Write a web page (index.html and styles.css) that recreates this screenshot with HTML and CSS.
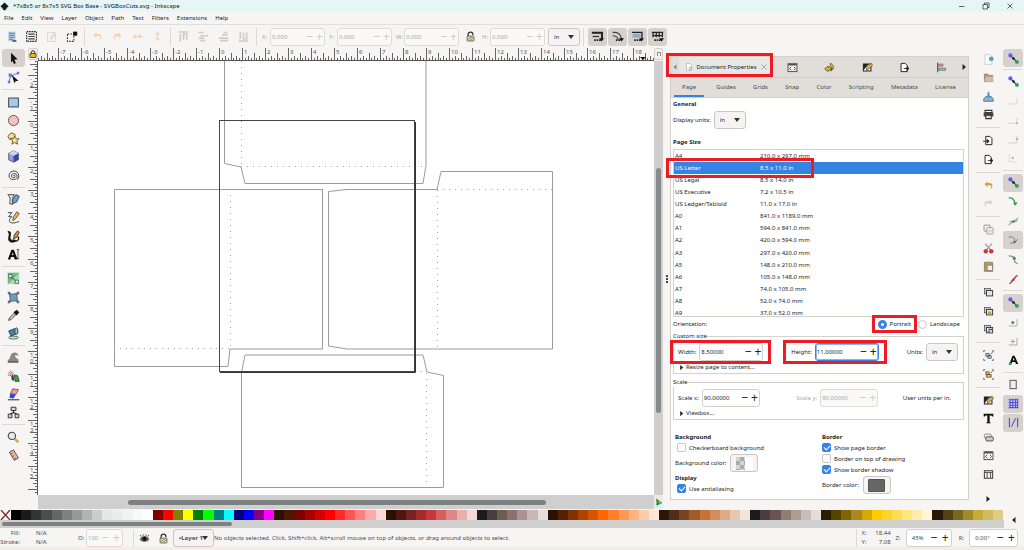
FILE: index.html
```
<!DOCTYPE html>
<html lang="en">
<head>
<meta charset="utf-8">
<title>*7x8x5 or 8x7x5 SVG Box Base - SVGBoxCuts.svg - Inkscape</title>
<link rel="stylesheet" href="styles.css">
</head>
<body>
<svg class="defs" aria-hidden="true">
  <symbol id="snapnodes" viewBox="0 0 16 16"><path d="M3 3l10 10" stroke="#333" stroke-width="1.600"/><circle cx="3.500" cy="3.500" r="3" fill="#5a5aff"/><circle cx="8" cy="8" r="1.900" fill="#222"/><circle cx="13" cy="13" r="2.800" fill="#2f9e5b"/></symbol>
  <symbol id="lock" viewBox="0 0 16 16"><path d="M4.500 8V5a3.500 3.500 0 0 1 7 0v1" fill="none" stroke="#333" stroke-width="1.800"/><rect x="3" y="7.500" width="10" height="7" rx="1" fill="#f5e6a8" stroke="#333"/><path d="M4 12.500l6-4M7 14l5-4" stroke="#555"/></symbol>
  <symbol id="undo" viewBox="0 0 16 16"><path d="M6.500 2L2 6l4.500 4V7.500H10c2 0 2.500 1.500 1.500 3.500l-1 2.500c4-2 5-9-1-9h-3z" fill="currentColor"/></symbol>
  <symbol id="fillstroke" viewBox="0 0 16 16"><path d="M2 3h11v10H2z" fill="#fff" stroke="#222" stroke-width="1.500"/><path d="M2 3h8L2 12z" fill="#222"/><path d="M6 12l1-4 6-6 2.500 2.500L9 11z" fill="#e9b93a" stroke="#222" stroke-width=".8"/></symbol>
  <symbol id="xml" viewBox="0 0 16 16"><rect x="1.500" y="2.500" width="13" height="11.500" fill="#f4f4f4" stroke="#444" stroke-width="1.300"/><path d="M2 4h12" stroke="#444" stroke-width="2"/><path d="M6 7L3.700 9.500 6 12M10 7l2.300 2.500L10 12" fill="none" stroke="#444" stroke-width="1.300"/></symbol>
  <symbol id="export" viewBox="0 0 16 16"><path d="M3 2h6l3 3v9H3z" fill="#fff" stroke="#222" stroke-width="1.400"/><path d="M7 9.500h7M11.500 7l3 2.500-3 2.500z" fill="#222" stroke="#222" stroke-width="1.200"/></symbol>
  <symbol id="copies" viewBox="0 0 16 16"><rect x="2" y="2" width="9" height="8" fill="#c8d0d8" stroke="#444"/><rect x="5" y="5" width="9" height="8" fill="#dfe5ea" stroke="#333" stroke-width="1.300"/></symbol>
  <symbol id="right" viewBox="0 0 16 16"><path d="M5 2l7 6-7 6z" fill="#222"/></symbol>
</svg>

<header class="titlebar">
  <svg class="icon small" viewBox="0 0 16 16"><path d="M8 1l7 6.500c.5 1.500-3 2-3 2l1 1.500-3 1 1 1.500L8 15l-3-1.500 1-1.500-3-1 1-1.500s-3.500-.5-3-2z" fill="#15191c"/></svg>
  <h1>*7x8x5 or 8x7x5 SVG Box Base - SVGBoxCuts.svg - Inkscape</h1>
  <div class="winbuttons">
    <button aria-label="Minimize"><svg class="icon mini" viewBox="0 0 16 16"><path d="M2 9h11" stroke="#333" stroke-width="1.500"/></svg></button>
    <button aria-label="Restore"><svg class="icon mini" viewBox="0 0 16 16"><path d="M2 5h9v9H2zM5 5V2h9v9h-3" fill="none" stroke="#333" stroke-width="1.500"/></svg></button>
    <button aria-label="Close"><svg class="icon mini" viewBox="0 0 16 16"><path d="M3 3l10 10M13 3L3 13" stroke="#333" stroke-width="1.500"/></svg></button>
  </div>
</header>

<nav class="menubar">
  <button>File</button><button>Edit</button><button>View</button><button>Layer</button><button>Object</button><button>Path</button><button>Text</button><button>Filters</button><button>Extensions</button><button>Help</button>
</nav>

<div class="toolbar">
  <div class="group">
    <button aria-label="Select all"><svg class="icon" viewBox="0 0 16 16"><rect x="4" y="2" width="9" height="12" fill="#b9cfe6"/><path d="M5 4h7M5 6.500h7M5 9h7M5 11.500h5" stroke="#5c81a8" stroke-width="1.200"/><path d="M9 13.500h5" stroke="#222" stroke-width="1.500"/></svg></button>
    <button aria-label="Select all in layers"><svg class="icon" viewBox="0 0 16 16"><rect x="2" y="2" width="12" height="12" fill="none" stroke="#222" stroke-width="1.300" stroke-dasharray="2 1"/><path d="M4 5h8M4 8h8M4 11h8" stroke="#444" stroke-width="1.500"/></svg></button>
    <button aria-label="Deselect"><svg class="icon faded" viewBox="0 0 16 16"><rect x="3" y="3" width="10" height="11" fill="none" stroke="#bbb"/><path d="M6 10l5-6 2 2-5 6z" fill="#f6cfa0" stroke="#cba"/></svg></button>
    <button aria-label="Touch selection"><svg class="icon" viewBox="0 0 16 16"><rect x="3" y="5" width="8" height="9" fill="none" stroke="#333" stroke-width="1.300" stroke-dasharray="2 1.500"/><rect x="10" y="2" width="5" height="5" fill="#111"/></svg></button>
  </div>
  <div class="group orange">
    <button aria-label="Rotate left"><svg class="icon small"><use href="#undo"/></svg></button>
    <button aria-label="Rotate right"><svg class="icon small flip"><use href="#undo"/></svg></button>
    <button aria-label="Flip horizontal"><svg class="icon small" viewBox="0 0 16 16"><path d="M1 8l4-4v3h6V4l4 4-4 4V9H5v3z" fill="currentColor"/></svg></button>
    <button aria-label="Flip vertical"><svg class="icon small" viewBox="0 0 16 16"><path d="M8 1l4 4H9v6h3l-4 4-4-4h3V5H4z" fill="currentColor"/></svg></button>
  </div>
  <div class="group grey">
    <button aria-label="Raise to top"><svg class="icon" viewBox="0 0 16 16"><path d="M2 2.500h12M4 14V5M8 12V5h4v7" fill="none" stroke="currentColor" stroke-width="2"/></svg></button>
    <button aria-label="Raise"><svg class="icon" viewBox="0 0 16 16"><path d="M2 3h6M4 7h10M2 10h7M4 13h6" fill="none" stroke="currentColor" stroke-width="2"/></svg></button>
    <button aria-label="Lower"><svg class="icon" viewBox="0 0 16 16"><path d="M8 3h5M6 6h7M2 10h12M4 13h10" fill="none" stroke="currentColor" stroke-width="2"/></svg></button>
    <button aria-label="Lower to bottom"><svg class="icon" viewBox="0 0 16 16"><path d="M2 13.500h12M4 2v9M8 3v8h4V3" fill="none" stroke="currentColor" stroke-width="2"/></svg></button>
  </div>
  <div class="group fields">
    <label for="fx">X:</label><span class="spin off"><input id="fx" value="0.000" disabled><button disabled>−</button><button disabled>+</button></span>
    <label for="fy">Y:</label><span class="spin off"><input id="fy" value="0.000" disabled><button disabled>−</button><button disabled>+</button></span>
    <label for="fw">W:</label><span class="spin off"><input id="fw" value="0.000" disabled><button disabled>−</button><button disabled>+</button></span>
    <button aria-label="Lock ratio" class="lockbtn"><svg class="icon small"><use href="#lock"/></svg></button>
    <label for="fh">H:</label><span class="spin off"><input id="fh" value="0.000" disabled><button disabled>−</button><button disabled>+</button></span>
    <span class="drop"><select aria-label="Unit"><option>in</option></select></span>
  </div>
  <div class="group toggles">
    <button aria-label="Scale stroke" class="on"><svg class="icon" viewBox="0 0 16 16"><path d="M1 3.500h12.500v7" fill="none" stroke="#222" stroke-width="2.500"/><path d="M2 8h8" stroke="#333" stroke-width="1.500"/><path d="M4 12.500h9" stroke="#222" stroke-width="2" stroke-dasharray="2 1"/><path d="M10 10h6l-3 4z" fill="#111"/></svg></button>
    <button aria-label="Scale corners" class="on"><svg class="icon" viewBox="0 0 16 16"><path d="M2 3c6-1 10 2 11 8" fill="none" stroke="#444" stroke-width="1.500"/><path d="M2 7c4 0 6 1 7 5" fill="none" stroke="#444" stroke-width="1.300"/><path d="M6 12.500h7" stroke="#222" stroke-width="2" stroke-dasharray="2 1"/><path d="M10 10h6l-3 4z" fill="#111"/></svg></button>
    <button aria-label="Move gradients" class="on"><svg class="icon" viewBox="0 0 16 16"><path d="M1 3h12.500v7" fill="none" stroke="#222" stroke-width="1.600"/><path d="M2 4.500h10v5H2z" fill="#8faecb"/><path d="M4 12.500h9" stroke="#222" stroke-width="2" stroke-dasharray="2 1"/><path d="M10 10h6l-3 4z" fill="#111"/></svg></button>
    <button aria-label="Move patterns" class="on"><svg class="icon" viewBox="0 0 16 16"><path d="M1 3h14M2.500 3v6M6.500 3v6M10 3v6M14 3v6M2 7h12" stroke="#222" stroke-width="1.500"/><path d="M4 12.500h9" stroke="#222" stroke-width="2" stroke-dasharray="2 1"/><path d="M10 10h6l-3 4z" fill="#111"/></svg></button>
  </div>
</div>

<main class="work">
  <aside class="toolbox">
    <button class="on" aria-label="Selector"><svg class="icon" viewBox="0 0 16 16"><path d="M5 1l8 8-4 .5 2 4-2.500 1.200-1.700-4L5 13z" fill="#111"/></svg></button>
    <button aria-label="Node"><svg class="icon" viewBox="0 0 16 16"><path d="M3 14C2 8 6 4 14 3" fill="none" stroke="#7a8ed8" stroke-width="1.300"/><path d="M1 12h3v3H1zM2 3h4v4H2zM12 1h3v3h-3z" fill="#5a78e8"/><path d="M6 5l8 7-3.500.5L9 15z" fill="#111"/></svg></button>
    <i class="sep"></i>
    <button aria-label="Rectangle"><svg class="icon" viewBox="0 0 16 16"><rect x="2" y="2.500" width="12" height="11" fill="#a9c8e6" stroke="#345" stroke-width="1.200"/></svg></button>
    <button aria-label="Ellipse"><svg class="icon" viewBox="0 0 16 16"><circle cx="8" cy="8" r="6.200" fill="#f8c0c6" stroke="#654" stroke-width="1.200"/></svg></button>
    <button aria-label="Star"><svg class="icon" viewBox="0 0 16 16"><path d="M1 5l4-4 5 2-1 5-6 1z" fill="#f3d98b" stroke="#5a4a20"/><path d="M9.500 5l1.500 3 4 .5-3 2.500 1 4-3.500-2L6 15l1-4-3-2.500 4-.5z" fill="#f9e08a" stroke="#5a4a20"/></svg></button>
    <button aria-label="3D box"><svg class="icon" viewBox="0 0 16 16"><path d="M8 1l6 3v8l-6 3-6-3V4z" fill="#8d9fe0" stroke="#556"/><path d="M8 7l6-3v8l-6 3z" fill="#344a9c"/><path d="M2 4l6-3 6 3-6 3z" fill="#ccd6f6"/></svg></button>
    <button aria-label="Spiral"><svg class="icon" viewBox="0 0 16 16"><path d="M8 8.500c0-1.500 2-1 2 .5 0 2.500-4.500 2.500-4.500-.5 0-4 7-4 7 .5 0 5.500-10 5.500-10-.5 0-8 12-8 12 0 0 2-1 4-2 5" fill="none" stroke="#444" stroke-width="1.200"/></svg></button>
    <i class="sep"></i>
    <button aria-label="Pen"><svg class="icon" viewBox="0 0 16 16"><path d="M1 2h8c-3 3-1 8-2 12l-4-1c1-4 2-7-2-11z" fill="#ddd" stroke="#333"/><path d="M7 13V8l4-6 4 2-3 7z" fill="#6fa2cf" stroke="#333"/></svg></button>
    <button aria-label="Pencil"><svg class="icon" viewBox="0 0 16 16"><path d="M1 2h5L2 7h4c-3 3-4 5-2 7 3 2 7 0 11-1" fill="none" stroke="#444" stroke-width="1.200"/><path d="M7 12l1-5 4-6 3 2-4 6z" fill="#f0b438" stroke="#543"/></svg></button>
    <button aria-label="Calligraphy"><svg class="icon" viewBox="0 0 16 16"><path d="M1 2c6-1 2 5 3 9 1 2 3 2 4 1l3 1c-2 3-9 3-9-2 0-4 2-7-1-9z" fill="#111" stroke="#111"/><path d="M8 11l1-5 4-5 2 2-3 6z" fill="#d98b32" stroke="#321"/><path d="M10 14c3 0 5-2 4-6" fill="none" stroke="#111" stroke-width="1.600"/></svg></button>
    <button aria-label="Text"><svg class="icon" viewBox="0 0 16 16"><path d="M1 14l4.500-12h3L13 14h-3.500l-1-3H5l-1 3zM6 8.500h2L7 5.500z" fill="#111" fill-rule="evenodd"/><path d="M12 2h3M13.500 2v11M12 13h3" stroke="#333"/></svg></button>
    <i class="sep"></i>
    <button aria-label="Gradient"><svg class="icon" viewBox="0 0 16 16"><rect x="1" y="1" width="14" height="14" fill="#a6dcae"/><path d="M1 1h14L1 15z" fill="#6fb87e"/><path d="M4 5l8 7" stroke="#222"/><path d="M2 3h4v4H2zM10 10h4v4h-4z" fill="#e8f4e8" stroke="#456"/></svg></button>
    <button aria-label="Mesh"><svg class="icon" viewBox="0 0 16 16"><path d="M3 3c4 2 6 0 10 0-2 4 0 6 0 10-4-2-6 0-10 0 2-4 0-6 0-10z" fill="#6d9fae" stroke="#345"/><path d="M8 3v10M3 8h10" stroke="#4b8"/><path d="M1 1h3v3H1zM12 1h3v3h-3zM1 12h3v3H1zM12 12h3v3h-3z" fill="#668"/></svg></button>
    <button aria-label="Dropper"><svg class="icon" viewBox="0 0 16 16"><path d="M2 14l1-3 6-6 2 2-6 6z" fill="#ccc" stroke="#333"/><path d="M8 4l4-3 3 3-3 4z" fill="#111"/></svg></button>
    <button aria-label="Paint bucket"><svg class="icon" viewBox="0 0 16 16"><path d="M2 5l7-3 4 6-8 3z" fill="#4d82a8" stroke="#234"/><ellipse cx="11.500" cy="5" rx="2" ry="4" fill="#9bc" stroke="#234"/><ellipse cx="8" cy="13" rx="6" ry="1.800" fill="#d5e5d5" stroke="#354"/></svg></button>
    <i class="sep"></i>
    <button aria-label="Tweak"><svg class="icon" viewBox="0 0 16 16"><path d="M1 14v-3c4-1 2-8 7-9 3-1 6 1 6 4l-3-1c-2 0-1 4 3 5v4z" fill="#888"/><path d="M1 13.500h13" stroke="#555" stroke-width="1.500"/></svg></button>
    <button aria-label="Spray"><svg class="icon" viewBox="0 0 16 16"><path d="M2 3l5 3M1 6l6 1M4 1l4 4" stroke="#a55" stroke-width="1.500" stroke-dasharray="1.500 1"/><path d="M5 7l3-1 1 7H6z" fill="#444"/><path d="M9 6l4 1 2 7h-5z" fill="#4c9a4c" stroke="#243"/></svg></button>
    <button aria-label="Eraser"><svg class="icon" viewBox="0 0 16 16"><path d="M7 1l7 1-3 6-7-1z" fill="#eba184" stroke="#844"/><path d="M4 7l7 1-3 5-5-1z" fill="#2c46d8"/><path d="M1 14.500h14" stroke="#333" stroke-width="1.300"/></svg></button>
    <button aria-label="Connector"><svg class="icon" viewBox="0 0 16 16"><path d="M8 5v3M4 10l4-2 4 2" fill="none" stroke="#222" stroke-width="1.400"/><path d="M5 1.500h6v4H5zM1.500 10h4.500v4.500H1.500zM10 10h4.500v4.500H10z" fill="#c8d8ea" stroke="#333" stroke-width="1.200"/></svg></button>
    <i class="sep"></i>
    <button aria-label="Zoom"><svg class="icon" viewBox="0 0 16 16"><path d="M9 9l5 5" stroke="#e0a52c" stroke-width="3"/><circle cx="6" cy="6" r="4.500" fill="#dcebf6" stroke="#444" stroke-width="1.300"/></svg></button>
    <button aria-label="Measure"><svg class="icon" viewBox="0 0 16 16"><path d="M3 4l5-3 6 10-5 3z" fill="#e3b8a4" stroke="#6a4a40" stroke-width="1.200"/><path d="M5 6l2-1M7 9l2-1M9 12l2-1" stroke="#644"/></svg></button>
  </aside>

  <section class="canvasarea">
    <button class="guidelock" aria-label="Lock guides"><svg class="icon mini" viewBox="0 0 16 16"><path d="M4.500 8V5a3.500 3.500 0 0 1 7 0v3" fill="none" stroke="#222" stroke-width="2"/><rect x="2" y="7" width="12" height="8" rx="1" fill="#e8b923" stroke="#222" stroke-width="1.500"/></svg></button>
    <svg class="hruler" id="hruler"></svg>
    <button class="cornerbtn" aria-label="Zoom to page"><svg class="icon mini" viewBox="0 0 16 16"><path d="M5 12V5h6v7" fill="none" stroke="#666" stroke-width="1.500"/></svg></button>
    <svg class="vruler" id="vruler"></svg>
    <svg class="canvas" role="img" aria-label="Box drawing">
      <g transform="translate(-38 -61)" fill="none">
        <path class="cut" d="M224.500 61V163.500L241 167L245 183.500H423L426 165V61M322.500 189V349H230L228 366.500H114.500V189.500H322.500M437 189.500H347L328.500 191.500V346L347 349H552.500V171.500H441L437 189.500M241.500 487.500V373L245 355H423L427 372L443.500 375.500V487.500Z"/>
        <path class="fold" d="M241.500 61V164M241 166.500H426M230.500 189V349M114 348.500H230M437.500 190V349M437 189.500H552M426.500 373V487M241 371.500H426"/>
        <rect x="219.500" y="120.500" width="195" height="251" class="pageline"/>
        <path d="M415.500 122v250.500H220" class="shadow"/>
      </g>
    </svg>
    <div class="vscroll"><i></i></div>
    <div class="hscroll"><i></i></div>
    <button class="cms" aria-label="Color management"><svg class="icon mini" viewBox="0 0 16 16"><path d="M2 1l13 9-12 5z" fill="#3c3"/><path d="M2 1l6 4-3 5z" fill="#e33"/><path d="M3 15l2-6 4 3z" fill="#33e"/><path d="M9 6l5 4-5 2z" fill="#2bb"/></svg></button>
  </section>

  <div class="handle"><i></i></div>

  <section class="dialog">
    <div class="docktabs">
      <button class="arrow" aria-label="Previous"><svg class="icon mini" viewBox="0 0 16 16"><path d="M11 3L5 8l6 5z" fill="#888"/></svg></button>
      <div class="docktab current"><svg class="icon mini" viewBox="0 0 16 16"><path d="M3 1h7l3 3v11H3z" fill="#fff" stroke="#999"/><circle cx="11" cy="11" r="3" fill="#ddd" stroke="#888"/></svg><span>Document Properties</span><button aria-label="Close tab"><svg class="icon mini" viewBox="0 0 16 16"><path d="M3 3l10 10M13 3L3 13" stroke="#aaa" stroke-width="2"/></svg></button></div>
      <button class="docktab" aria-label="XML editor"><svg class="icon small"><use href="#xml"/></svg></button>
      <button class="docktab" aria-label="Export"><svg class="icon small" viewBox="0 0 16 16"><path d="M1 10l5-4v2c3-1 4-3 3-6 5 1 7 8 2 10H6v2z" fill="#e6b422" stroke="#444"/><path d="M9 7l4 2-3 5" fill="#555"/></svg></button>
      <button class="docktab" aria-label="Fill and stroke"><svg class="icon small"><use href="#fillstroke"/></svg></button>
      <button class="docktab" aria-label="Export image"><svg class="icon small"><use href="#export"/></svg></button>
      <button class="docktab" aria-label="Align"><svg class="icon small" viewBox="0 0 16 16"><path d="M2.500 1v14" stroke="#333" stroke-width="1.400"/><path d="M4 3h6v3H4z" fill="#e0a0a0" stroke="#855"/><path d="M4 9h10v3H4z" fill="#a9c8e6" stroke="#456"/></svg></button>
      <button class="arrow" aria-label="Next"><svg class="icon mini"><use href="#right"/></svg></button>
    </div>
    <div class="subtabs">
      <button class="current">Page</button><button>Guides</button><button>Grids</button><button>Snap</button><button>Color</button><button>Scripting</button><button>Metadata</button><button>License</button>
    </div>
    <div class="page">
      <h2>General</h2>
      <div class="line units"><label for="du">Display units:</label><span class="drop"><select id="du"><option>in</option></select></span></div>
      <h2 class="sizehead">Page Size</h2>
      <div class="list">
        <table>
          <tr><td>A4</td><td>210.0 x 297.0 mm</td></tr>
          <tr class="picked"><td>US Letter</td><td>8.5 x 11.0 in</td></tr>
          <tr><td>US Legal</td><td>8.5 x 14.0 in</td></tr>
          <tr><td>US Executive</td><td>7.2 x 10.5 in</td></tr>
          <tr><td>US Ledger/Tabloid</td><td>11.0 x 17.0 in</td></tr>
          <tr><td>A0</td><td>841.0 x 1189.0 mm</td></tr>
          <tr><td>A1</td><td>594.0 x 841.0 mm</td></tr>
          <tr><td>A2</td><td>420.0 x 594.0 mm</td></tr>
          <tr><td>A3</td><td>297.0 x 420.0 mm</td></tr>
          <tr><td>A5</td><td>148.0 x 210.0 mm</td></tr>
          <tr><td>A6</td><td>105.0 x 148.0 mm</td></tr>
          <tr><td>A7</td><td>74.0 x 105.0 mm</td></tr>
          <tr><td>A8</td><td>52.0 x 74.0 mm</td></tr>
          <tr><td>A9</td><td>37.0 x 52.0 mm</td></tr>
        </table>
      </div>
      <div class="line orient"><span class="grow">Orientation:</span><label class="marked portrait"><input type="radio" name="o" checked>Portrait<i class="mark"></i></label><label><input type="radio" name="o">Landscape</label></div>
      <fieldset>
        <legend>Custom size</legend>
        <div class="line custom">
          <span class="field marked"><label for="pw">Width:</label><span class="spin"><input id="pw" value="8.50000"><button>−</button><button>+</button></span><i class="mark"></i></span>
          <span class="field marked"><label for="ph">Height:</label><span class="spin focus"><input id="ph" value="11.00000"><button>−</button><button>+</button></span><i class="mark"></i></span>
          <span class="field"><label for="pu">Units:</label><span class="drop"><select id="pu"><option>in</option></select></span></span>
        </div>
        <button class="expander"><svg class="icon tiny"><use href="#right"/></svg>Resize page to content...</button>
      </fieldset>
      <fieldset>
        <legend>Scale</legend>
        <div class="line scale">
          <span class="field"><label for="sx">Scale x:</label><span class="spin"><input id="sx" value="90.00000"><button>−</button><button>+</button></span></span>
          <span class="field"><label for="sy" class="dim">Scale y:</label><span class="spin off"><input id="sy" value="90.00000" disabled><button disabled>−</button><button disabled>+</button></span></span>
          <span class="perunit">User units per in.</span>
        </div>
        <button class="expander"><svg class="icon tiny"><use href="#right"/></svg>Viewbox...</button>
      </fieldset>
      <div class="columns">
        <div>
          <h2>Background</h2>
          <label class="check"><input type="checkbox">Checkerboard background</label>
          <div class="color">Background color:<button class="colorbtn" aria-label="Background color"><i class="half"></i></button></div>
          <h2>Display</h2>
          <label class="check"><input type="checkbox" checked>Use antialiasing</label>
        </div>
        <div>
          <h2>Border</h2>
          <label class="check"><input type="checkbox" checked>Show page border</label>
          <label class="check"><input type="checkbox">Border on top of drawing</label>
          <label class="check"><input type="checkbox" checked>Show border shadow</label>
          <div class="color">Border color:<button class="colorbtn" aria-label="Border color"><i class="solid"></i></button></div>
        </div>
      </div>
    </div>
    <i class="mark tabmark"></i>
    <i class="mark rowmark"></i>
  </section>

  <aside class="commands">
    <div class="stack">
      <button aria-label="New"><svg class="icon small" viewBox="0 0 16 16"><path d="M3 1h7l3 3v11H3z" fill="#fff" stroke="#bbb"/><circle cx="12" cy="7" r="3.500" fill="#5b9bd0"/></svg></button>
      <button aria-label="Open"><svg class="icon small" viewBox="0 0 16 16"><path d="M2 3h5l1 2h6v9H2z" fill="#b89a7c" stroke="#8c705a"/><path d="M4 7h11v7H2z" fill="#d3bca4"/></svg></button>
      <button aria-label="Save"><svg class="icon small" viewBox="0 0 16 16"><path d="M4 8h8l3 4v3H1v-3z" fill="#8fb3d8" stroke="#457"/><path d="M7 1h2l1 7h2l-4 3-4-3h2z" fill="#5d95cf"/></svg></button>
      <button aria-label="Print"><svg class="icon small" viewBox="0 0 16 16"><path d="M3 2h10v3H3z" fill="#fff" stroke="#333" stroke-width="1.500"/><path d="M1 5h14v6H1z" fill="#444"/><path d="M4 9h8v5H4z" fill="#ddd" stroke="#333" stroke-width="1.500"/></svg></button>
      <i class="sep"></i>
      <button aria-label="Import"><svg class="icon small" viewBox="0 0 16 16"><path d="M4 2h6l3 3v9H4z" fill="#fff" stroke="#222" stroke-width="1.400"/><path d="M0 9h8M6 6.500L9 9l-3 2.500z" fill="#222" stroke="#222" stroke-width="1.200"/></svg></button>
      <button aria-label="Export"><svg class="icon small"><use href="#export"/></svg></button>
      <i class="sep"></i>
      <button aria-label="Undo" class="gold"><svg class="icon small"><use href="#undo"/></svg></button>
      <button aria-label="Redo" class="pale"><svg class="icon small flip"><use href="#undo"/></svg></button>
      <i class="sep"></i>
      <button aria-label="Copy"><svg class="icon small" viewBox="0 0 16 16"><rect x="1.500" y="1.500" width="9" height="9" rx="1" fill="#eee" stroke="#777"/><rect x="5.500" y="5.500" width="9" height="9" rx="1" fill="#fff" stroke="#777"/><path d="M7 9h6M7 11.500h6" stroke="#aaa"/></svg></button>
      <button aria-label="Cut"><svg class="icon small" viewBox="0 0 16 16"><path d="M3 1l8 9M13 1L5 10" stroke="#999" stroke-width="1.800"/><circle cx="4" cy="12" r="2.700" fill="#d33" stroke="#b22"/><circle cx="12" cy="12" r="2.700" fill="#d33" stroke="#b22"/></svg></button>
      <button aria-label="Paste"><svg class="icon small" viewBox="0 0 16 16"><path d="M2 2h12v13H2z" fill="#c99a45" stroke="#764"/><path d="M5 1h6v3H5z" fill="#999"/><path d="M6 6h8v8H6z" fill="#eee" stroke="#666"/></svg></button>
      <i class="sep"></i>
      <button aria-label="Duplicate"><svg class="icon small"><use href="#copies"/></svg></button>
      <button aria-label="Clone"><svg class="icon small" viewBox="0 0 16 16"><use href="#copies"/><path d="M7 8h5v4H7z" fill="#c9a227"/></svg></button>
      <button aria-label="Unlink clone"><svg class="icon small" viewBox="0 0 16 16"><use href="#copies"/><path d="M8 7h5v2H8zM7 10h3v2H7z" fill="#456"/></svg></button>
      <i class="sep"></i>
      <button aria-label="Group"><svg class="icon small" viewBox="0 0 16 16"><path d="M4 5h5v4H4zM7 8h5v4H7z" fill="#b5c6d8" stroke="#345"/><path d="M1 3V1h2M13 1h2v2M1 13v2h2M15 13v2h-2M11 6l3-3" fill="none" stroke="#555" stroke-width="1.300"/></svg></button>
      <button aria-label="Ungroup"><svg class="icon small" viewBox="0 0 16 16"><path d="M4 4h5v4H4zM5 8h7v4H5z" fill="#e6b54a" stroke="#543"/><path d="M1 3V1h2M13 1h2v2M1 13v2h2M15 13v2h-2M11 6l3-3" fill="none" stroke="#555" stroke-width="1.300"/></svg></button>
      <i class="sep"></i>
      <button aria-label="Fill and stroke"><svg class="icon small"><use href="#fillstroke"/></svg></button>
      <button aria-label="Text and font"><svg class="icon small" viewBox="0 0 16 16"><path d="M1 1h14v4h-1.500L12 3.500H9.700V13l2 2h-7.400l2-2V3.500H4L2.500 5H1z" fill="#111"/></svg></button>
      <button aria-label="Layers"><svg class="icon small" viewBox="0 0 16 16"><rect x="2" y="3" width="10" height="6" rx="2" fill="#eee" stroke="#666"/><rect x="4" y="7" width="11" height="6" rx="2" fill="#ccc" stroke="#444" stroke-width="1.300"/></svg></button>
      <button aria-label="XML editor"><svg class="icon small"><use href="#xml"/></svg></button>
      <button aria-label="Document properties"><svg class="icon small" viewBox="0 0 16 16"><rect x="2" y="2.500" width="12" height="11" fill="#f4f4f4" stroke="#444" stroke-width="1.500"/><path d="M2 5h12M6 5v8M11 5v8" stroke="#444" stroke-width="1.300"/></svg></button>
    </div>
    <button aria-label="More"><svg class="icon mini"><use href="#right"/></svg></button>
  </aside>

  <aside class="snapbar">
    <button class="on" aria-label="Snap"><svg class="icon small"><use href="#snapnodes"/></svg></button>
    <i class="sep"></i>
    <button aria-label="Snap boxes"><svg class="icon small"><use href="#snapnodes"/></svg></button>
    <button aria-label="Edges"><svg class="icon small faded" viewBox="0 0 16 16"><path d="M2 13h11V5" fill="none" stroke="#999" stroke-dasharray="3 1"/></svg></button>
    <button aria-label="Corners"><svg class="icon small faded" viewBox="0 0 16 16"><path d="M1 12h12V4" fill="none" stroke="#999"/><circle cx="13" cy="12" r="1.500" fill="#777"/></svg></button>
    <button aria-label="Edge midpoints"><svg class="icon small faded" viewBox="0 0 16 16"><path d="M1 13h12V2" fill="none" stroke="#999"/><circle cx="13" cy="7" r="1.700" fill="#777"/></svg></button>
    <button aria-label="Centers"><svg class="icon small faded" viewBox="0 0 16 16"><path d="M2 2v11h11" fill="none" stroke="#999" stroke-dasharray="3 1"/><circle cx="7" cy="7" r="1.700" fill="#777"/></svg></button>
    <i class="sep"></i>
    <button class="on" aria-label="Snap nodes"><svg class="icon small"><use href="#snapnodes"/></svg></button>
    <button aria-label="Paths"><svg class="icon small" viewBox="0 0 16 16"><path d="M1 3c5-1 9 2 9 9" fill="none" stroke="#3c9a4c" stroke-width="2"/><path d="M7 10l4 4 3-5z" fill="#3c9a4c"/></svg></button>
    <button aria-label="Intersections"><svg class="icon small" viewBox="0 0 16 16"><path d="M1 13L15 3M2 9c4-3 8 1 12-3" fill="none" stroke="#777" stroke-width="1.300"/><circle cx="8" cy="8" r="2" fill="#3c9a5c"/></svg></button>
    <button class="on" aria-label="Cusp nodes"><svg class="icon small" viewBox="0 0 16 16"><path d="M1 3c7-1 10 2 8 7M3 12l7-1 4-5" fill="none" stroke="#777" stroke-width="1.300"/><circle cx="9.500" cy="10" r="2" fill="#4a8a64"/></svg></button>
    <button aria-label="Smooth nodes"><svg class="icon small" viewBox="0 0 16 16"><path d="M1 3c6-1 9 2 9 9l4 2" fill="none" stroke="#777" stroke-width="1.500"/><circle cx="9" cy="6" r="2.300" fill="#4a8a64"/></svg></button>
    <button aria-label="Tangents"><svg class="icon small" viewBox="0 0 16 16"><path d="M2 14c5-1 6-10 12-12" fill="none" stroke="#c33" stroke-width="2"/><path d="M4 10l8-5" stroke="#666"/><circle cx="8" cy="8" r="2" fill="#c44"/></svg></button>
    <i class="sep"></i>
    <button class="on" aria-label="Snap others"><svg class="icon small"><use href="#snapnodes"/></svg></button>
    <button aria-label="Object centers"><svg class="icon small" viewBox="0 0 16 16"><path d="M1 13h12V3" fill="none" stroke="#999"/><circle cx="7" cy="8" r="2.200" fill="#3c9a5c"/></svg></button>
    <button aria-label="Rotation centers"><svg class="icon small" viewBox="0 0 16 16"><path d="M1 13h12V3M7 5v6M4 8h6" fill="none" stroke="#888"/></svg></button>
    <button aria-label="Text baselines"><svg class="icon small" viewBox="0 0 16 16"><path d="M2 13L6.500 1h3L15 13h-3.500l-1-3H6l-1 3zM7 7.500h2.500L8.300 4z" fill="#111" fill-rule="evenodd"/><circle cx="3" cy="13" r="2" fill="#3c9a5c"/></svg></button>
    <i class="sep"></i>
    <button aria-label="Page border"><svg class="icon small" viewBox="0 0 16 16"><rect x="3" y="2" width="9" height="12" fill="#eee" stroke="#666" stroke-width="1.600"/></svg></button>
    <button class="on" aria-label="Grids"><svg class="icon small" viewBox="0 0 16 16"><path d="M1 2.500h14M1 6.500h14M1 10.500h14M1 14h14M3 1v14M7 1v14M11 1v14M14 1v14" stroke="#4a4af0" stroke-width="1.500"/></svg></button>
    <button class="on" aria-label="Guides"><svg class="icon small" viewBox="0 0 16 16"><path d="M2 1v14M14 1v14M11 2L5 14" stroke="#4a4af0" stroke-width="1.600"/></svg></button>
  </aside>
</main>

<div class="palettebar">
  <div class="paletteview">
    <div class="swatches" id="swatches"><button class="none" aria-label="No paint"><svg viewBox="0 0 11 10"><path d="M1 0l9 10M10 0L1 10" stroke="#7a2a20" stroke-width="1.300"/></svg></button></div>
    <div class="pscroll"><i></i></div>
  </div>
  <button class="pmenu" aria-label="Palette menu"><svg class="icon mini" viewBox="0 0 16 16"><path d="M11 2L4 8l7 6z" fill="#222"/></svg></button>
</div>

<footer class="status">
  <dl class="paint"><dt>Fill:</dt><dd>N/A</dd><dt>Stroke:</dt><dd>N/A</dd></dl>
  <label for="op" class="opacity">O:</label><span class="spin off narrow"><input id="op" value="100" disabled><button disabled>−</button><button disabled>+</button></span>
  <i class="vsep"></i>
  <button aria-label="Layer visibility"><svg class="icon small" viewBox="0 0 16 16"><path d="M1 9c3-6 11-6 14 0-3 5-11 5-14 0z" fill="#666"/><circle cx="8" cy="8.500" r="3" fill="#111"/><path d="M3 5L2 3M6 4V2M10 4V2M13 5l1-2" stroke="#333" stroke-width="1.300"/></svg></button>
  <button aria-label="Layer lock"><svg class="icon small"><use href="#lock"/></svg></button>
  <span class="drop layer"><select aria-label="Layer"><option>•Layer 1</option></select></span>
  <p>No objects selected. Click, Shift+click, Alt+scroll mouse on top of objects, or drag around objects to select.</p>
  <dl class="coords"><dt>X:</dt><dd>18.44</dd><dt>Y:</dt><dd>7.08</dd></dl>
  <label for="zm">Z:</label><span class="spin zoom"><input id="zm" value="45%"><button>−</button><button>+</button></span>
  <label for="rt">R:</label><span class="spin rot"><input id="rt" value="0.00°"><button>−</button><button>+</button></span>
</footer>
<script src="script.js"></script>
</body>
</html>
```
FILE: styles.css
```
* { box-sizing: border-box; }
body {
  margin: 0;
  height: 100vh;
  display: flex;
  flex-direction: column;
  background: #f6f5f4;
  color: #202628;
  font: 6px/10px "Noto Sans", "Open Sans", sans-serif;
  overflow: hidden;
}
button, input, select { font: inherit; color: inherit; }
button { border: 0; padding: 0; background: none; display: flex; align-items: center; justify-content: center; }
h1, h2, p, dl, dd { margin: 0; font-size: inherit; }
.defs { position: absolute; width: 0; height: 0; }
.icon { width: 13px; height: 13px; display: block; flex: none; }
.icon.small { width: 11px; height: 11px; }
.icon.mini { width: 8px; height: 8px; }
.icon.tiny { width: 7px; height: 7px; }
.flip { transform: scaleX(-1); }
.faded { opacity: .55; }

.titlebar { height: 12px; background: #e6f6f7; display: flex; align-items: center; padding: 0 10px 0 0; }
.titlebar .icon.small { width: 9px; height: 9px; margin-right: 4px; }
.titlebar h1 { flex: 1; font: 400 6px/12px "Noto Sans", "Open Sans", sans-serif; color: #111; }
.winbuttons { display: flex; gap: 16px; }

.menubar { height: 13px; display: flex; align-items: center; gap: 8px; padding-left: 4px; border-bottom: 1px solid #e2dfdc; }

.toolbar { height: 23px; display: flex; align-items: center; }
.group { display: flex; align-items: center; gap: 7px; padding: 0 6px; height: 18px; border-right: 1px solid #dcd9d6; }
.group:first-child { padding-left: 5px; }
.group:last-child { border: 0; }
.orange { color: #f6d3b0; gap: 9px; padding: 0 7px; }
.grey { color: #cfcdca; }
.fields { gap: 0; padding: 0 3px 0 5px; color: #a5a8a8; }
.fields label { width: 8px; }
.fields .spin { width: 55px; margin-right: 4px; }
.lockbtn { width: 23px; margin-left: -4px; }
.fields .spin + .drop { margin-left: -1px; color: #202628; }
.toggles { gap: 1px; padding-left: 4px; }
.on { background: #d6d1cd; border-radius: 3px; }
.toggles .on { width: 19px; height: 18px; }

.spin { display: flex; align-items: stretch; width: 56px; height: 18px; border: 1px solid #d4d0cc; border-radius: 3px; background: #fff; overflow: hidden; }
.spin input { flex: 1; min-width: 0; border: 0; padding: 0 1px; background: none; outline: 0; }
.spin button { width: 10px; font-size: 12px; color: #222; }
.spin button:last-child { width: 9px; }
.spin.off { background: #faf9f8; color: #a5a8a8; border-color: #dedbd8; }
.spin.off button { color: #cfcdca; }
.spin.focus { border: 1px solid #3584e4; outline: 1px solid #86b6ee; outline-offset: -2px; }
.drop { position: relative; display: block; width: 32px; height: 18px; }
.drop select { appearance: none; width: 100%; height: 100%; border: 1px solid #cdc7c2; border-radius: 3px; background: #f5f4f2; padding: 0 0 0 5px; }
.drop::after { content: ""; position: absolute; right: 6px; top: 7px; border: 3px solid transparent; border-top: 4px solid #333; border-bottom: 0; pointer-events: none; }

.work { flex: 1; min-height: 0; display: flex; }
.toolbox { width: 28px; padding: 1px 3px 46px 2px; display: flex; flex-direction: column; justify-content: space-between; }
.toolbox button { height: 15px; }
.toolbox .on { height: 18px; }
.sep { display: block; height: 1px; background: #dcd9d6; margin: 1px 0; }

.canvasarea { flex: 1; min-width: 0; display: grid; grid-template: 13px 1fr 14px / 10px 1fr 9px; }
.guidelock, .cornerbtn { border: 1px solid #d4d0cc; border-radius: 2px; background: #f3f1ef; height: 12px; }
.hruler, .vruler { width: 100%; height: 100%; display: block; overflow: hidden; }
.tick { stroke: #666; stroke-width: 1; }
.num { font-size: 6px; fill: #555; }
.hruler { border-bottom: 1px solid #555; }
.vruler { border-right: 1px solid #555; }
.canvas { width: 100%; height: 100%; background: #fff; display: block; }
.pageline { stroke: #444; }
.shadow { stroke: #333; stroke-width: 1; }
.cut { stroke: #9c9c9c; stroke-width: 1; }
.fold { stroke: #a5a5a5; stroke-width: 1; stroke-dasharray: 1 5; }
.vscroll { background: #cfcfcf; display: flex; justify-content: center; padding: 107px 0 82px; }
.vscroll i { width: 5px; background: #868a8b; border-radius: 3px; }
.hscroll { grid-column: 1 / 3; margin-left: 10px; background: #cfcfcf; display: flex; align-items: center; padding: 0 108px 0 90px; }
.hscroll i { flex: 1; height: 5px; background: #7c8182; border-radius: 3px; }
.cms { background: #eceae8; border-radius: 2px; }

.handle { width: 7px; display: flex; align-items: center; justify-content: center; }
.handle i { width: 2px; height: 8px; background: repeating-linear-gradient(#444 0 2px, transparent 2px 3px); }
.dialog { position: relative; width: 299px; margin: 8px 0 9px; border: 1px solid #d5d0cc; background: #fff; display: flex; flex-direction: column; }
.docktabs { height: 21px; display: flex; background: #e1deda; border-bottom: 1px solid #d2cdc8; }
.docktab { flex: 1; }
.docktab.current { flex: none; width: 95px; display: flex; align-items: center; justify-content: center; gap: 3px; background: #e9e7e4; }
.arrow { width: 8px; }
.subtabs { height: 20px; display: flex; justify-content: space-between; background: #e1deda; border-bottom: 1px solid #d2cdc8; padding: 0 7px 0 3px; color: #484d4f; }
.subtabs button { padding: 0 5px; border-bottom: 2px solid transparent; }
.subtabs .current { border-color: #3584e4; padding: 0 8px; }
.page { padding: 1px 4px 2px 2px; flex: 1; }
.page h2 { font-weight: 700; }
.line { display: flex; align-items: center; }
.units { height: 19px; gap: 3px; margin-top: 1px; }
.sizehead { margin: 8px 0 2px; }
.list { height: 168px; border: 1px solid #d5d0cc; overflow: hidden; }
.list table { width: 100%; height: 169px; border-collapse: collapse; table-layout: fixed; }
.list td { padding: 0 1px; line-height: 10px; }
.list td:first-child { width: 85px; }
.picked { background: #3584e4; color: #fff; }
.grow { flex: 1; }
.orient { height: 14px; gap: 7px; padding-right: 4px; }
.orient label { display: flex; align-items: center; gap: 3px; }
input[type=radio], input[type=checkbox] { appearance: none; margin: 0; width: 9px; height: 9px; border: 1px solid #cdc7c2; background: #fff; flex: none; }
input[type=radio] { border-radius: 50%; }
input[type=radio]:checked { border: 3px solid #3584e4; }
input[type=checkbox] { border-radius: 2px; }
input[type=checkbox]:checked { border-color: #3584e4; background: #3584e4; position: relative; }
input[type=checkbox]:checked::after { content: ""; position: absolute; left: 2px; top: 0; width: 3px; height: 5px; border: solid #fff; border-width: 0 1px 1px 0; transform: rotate(45deg); }
fieldset { margin: 0 0 3px; padding: 0 5px 0 4px; border: 1px solid #d5d0cc; min-width: 0; height: 43px; }
legend { padding: 0; margin-left: -5px; height: 10px; }
.custom, .scale { justify-content: space-between; height: 18px; margin-top: 2px; }
.field { display: flex; align-items: center; gap: 3px; }
.custom .spin { width: 64px; }
.scale .spin { width: 58px; }
.scale .field:first-child { margin-right: 12px; }
.perunit { margin-right: 7px; }
.dim { color: #a5a8a8; }
.expander { height: 12px; gap: 1px; }
.columns { display: grid; grid-template-columns: 1fr 1fr; gap: 5px; padding: 9px 0 0 2px; }
.check { display: flex; align-items: center; gap: 3px; height: 11px; }
.columns > div:first-child .check { padding-left: 2px; }
.color { display: flex; align-items: center; gap: 4px; height: 20px; }
.colorbtn { width: 28px; height: 18px; border: 1px solid #cdc7c2; border-radius: 3px; background: #f5f4f2; }
.colorbtn i { width: 17px; height: 13px; }
.half { background: linear-gradient(90deg, transparent 50%, #fff 50%), repeating-conic-gradient(#aaa 0 25%, #d5d5d5 0 50%) 0 0 / 8px 8px; }
.solid { background: #666; border: 1px solid #555; border-radius: 1px; }
.marked { position: relative; }
.mark { position: absolute; border: 3px solid #ed1c24; pointer-events: none; }
.marked > .mark { inset: -3px -8px; }
.portrait > .mark { inset: -4px -6px; }
.tabmark { left: -5px; top: -4px; width: 107px; height: 24px; }
.rowmark { left: -5px; top: 101px; width: 148px; height: 20px; }

.commands { width: 34px; padding: 4px 3px 3px 7px; display: flex; flex-direction: column; }
.stack { flex: 1; display: flex; flex-direction: column; justify-content: space-between; margin-bottom: 11px; }
.commands button { height: 14px; }
.gold { color: #cda434; }
.pale { color: #d6d4d1; }
.snapbar { width: 21px; padding: 1px 1px 77px 0; display: flex; flex-direction: column; justify-content: space-between; }
.snapbar button { height: 18px; }

.palettebar { display: flex; height: 19px; margin-top: 1px; }
.paletteview { flex: 1; min-width: 0; }
.swatches { display: flex; height: 10px; }
.swatches button { flex: 1; min-width: 0; }
.swatches .none { flex: none; width: 11px; background: #f6f5f4; }
.none svg { width: 11px; height: 10px; }
.pscroll { height: 8px; background: #cfcfcf; padding: 2px; }
.pscroll i { display: block; width: 23%; height: 4px; border-radius: 2px; background: #7c8182; }
.pmenu { width: 20px; }

.status { height: 21px; display: flex; align-items: center; border-bottom: 3px solid #f8ebe4; padding-right: 6px; color: #484d4f; }
.status dl { display: grid; line-height: 9px; }
.paint { grid-template-columns: 20px 1fr; column-gap: 16px; width: 78px; }
.paint dt { text-align: right; }
.opacity { width: 8px; }
.narrow { width: 37px; }
.vsep { width: 1px; height: 17px; background: #dcd9d6; margin: 0 4px 0 10px; }
.status > button { width: 13px; margin-right: 6px; }
.status > button + button { margin-right: 3px; }
.layer { width: 41px; font-weight: 700; }
.layer select { padding-left: 5px; }
.status p { flex: 1; white-space: nowrap; }
.coords { grid-template-columns: 8px 21px; border-left: 1px solid #dcd9d6; padding: 0 5px; }
.coords dd { text-align: right; }
.status .zoom { width: 46px; margin: 0 7px 0 5px; }
.status .rot { width: 49px; margin-left: 5px; }
.zoom input, .rot input { text-align: center; }
.status .spin button { width: 11px; }
```
FILE: script.js
```
const NS = "http://www.w3.org/2000/svg";
const INCH = 23;

function add(parent, name, attrs, text) {
  const el = document.createElementNS(NS, name);
  for (const key in attrs) el.setAttribute(key, attrs[key]);
  if (text) el.textContent = text;
  parent.appendChild(el);
}

// Tick lengths for each eighth of an inch.
const LENGTHS = [13, 3, 5, 3, 8, 3, 5, 3];

function tickPath(from, to, origin, depth, point) {
  let d = "";
  for (let n = from * 8; n < to * 8; n++) {
    const at = Math.round(origin + n * INCH / 8) + 0.5;
    const len = Math.min(depth, LENGTHS[((n % 8) + 8) % 8]);
    d += point(at, depth, len);
  }
  return d;
}

const h = document.getElementById("hruler");
add(h, "path", { class: "tick", d: tickPath(-8, 20, 181, 13, (p, e, l) => `M${p} ${e}V${e - l}`) });
for (let n = -7; n <= 18; n++) add(h, "text", { class: "num", x: 183 + n * INCH, y: 6 }, String(n));
add(h, "path", { d: "M602 9h6l-3 3z", fill: "#111" });

const v = document.getElementById("vruler");
add(v, "path", { class: "tick", d: tickPath(-3, 17, 60, 10, (p, e, l) => `M${e} ${p}H${e - l}`) });
for (let n = -2; n <= 15; n++) {
  String(n).split("").forEach((c, i) => add(v, "text", { class: "num", x: 2, y: 66 + n * INCH + i * 6 }, c));
}

const COLORS = `000 1a1a1a 333 4d4d4d 666 808080 999 b3b3b3 ccc e6e6e6 ececec f2f2f2 f9f9f9 fff
800000 f00 808000 ff0 008000 0f0 008080 0ff 000080 00f 800080 f0f
2b1100 501600 800000 aa0000 d40000 f00 ff2a2a ff5555 ff8080 ffaaaa ffd5d5
2b1100 501616 782121 a02c2c c83737 d35f5f de8787 e9afaf f4d7d7
1c1c1c 483e3b 6c5d53 916f6f ac9393 c8b7b7 e3dedb
2b1100 552200 803300 aa4400 d45500 ff6600 ff7f2a ff9955 ffb380 ffccaa ffe6d5
28170b 502d16 784421 a05a2c c87137 d38d5f deaa87 e9c6af f4e3d7
1c1c1c 483e3b 6c5353 917c6f ac9d93 c8beb7 e3dedb
2b1d00 554400 806600 aa8820 d4aa00 ffcc00 ffd42a ffdd55 ffe680 ffeeaa fff6d5
28170b 504416 786721 a08a2c c8ab37 d3bc5f decd87`.split(/\s+/);
const swatches = document.getElementById("swatches");
for (const c of COLORS) {
  const b = document.createElement("button");
  b.style.background = "#" + c;
  b.setAttribute("aria-label", "#" + c);
  swatches.appendChild(b);
}
```
